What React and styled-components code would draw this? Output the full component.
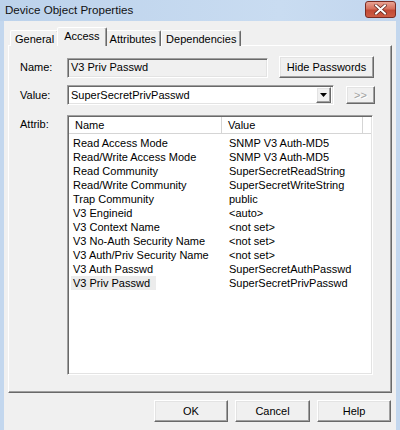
import styled, { createGlobalStyle, css } from "styled-components";

const GlobalStyle = createGlobalStyle`
  html, body {
    margin: 0;
    padding: 0;
    background: #ffffff;
  }
  body {
    font-family: "Liberation Sans", Arial, sans-serif;
    font-size: 11px;
    color: #000;
  }
`;

const ATTRIBS = [
  ["Read Access Mode", "SNMP V3 Auth-MD5"],
  ["Read/Write Access Mode", "SNMP V3 Auth-MD5"],
  ["Read Community", "SuperSecretReadString"],
  ["Read/Write Community", "SuperSecretWriteString"],
  ["Trap Community", "public"],
  ["V3 Engineid", "<auto>"],
  ["V3 Context Name", "<not set>"],
  ["V3 No-Auth Security Name", "<not set>"],
  ["V3 Auth/Priv Security Name", "<not set>"],
  ["V3 Auth Passwd", "SuperSecretAuthPasswd"],
  ["V3 Priv Passwd", "SuperSecretPrivPasswd"],
];

const TABS = ["General", "Access", "Attributes", "Dependencies"];

// classic 3d edges
const raised = css`
  border-style: solid;
  border-width: 1px;
  border-color: #ffffff #696969 #696969 #ffffff;
  box-shadow: inset -1px -1px 0 #a0a0a0, inset 1px 1px 0 #e3e3e3;
`;

const sunken = css`
  border-style: solid;
  border-width: 1px;
  border-color: #a0a0a0 #ffffff #ffffff #a0a0a0;
  box-shadow: inset 1px 1px 0 #696969, inset -1px -1px 0 #e3e3e3;
`;

const Window = styled.div`
  width: 400px;
  height: 430px;
  display: flex;
  flex-direction: column;
  background: #c3d7ee;
  overflow: hidden;
`;

const TitleBar = styled.div`
  height: 21px;
  flex: none;
  display: flex;
  align-items: flex-start;
  justify-content: space-between;
  background: linear-gradient(to right, #bcd2eb, #c9dcf1 70%, #c2d6ee);
`;

const Title = styled.div`
  font-size: 11.6px;
  line-height: 20px;
  padding-left: 5px;
  color: #111;
`;

const CloseButton = styled.div`
  width: 31px;
  height: 17px;
  margin-top: 1px;
  margin-right: 4px;
  box-sizing: border-box;
  border: 1px solid #7a2b22;
  border-radius: 3px;
  background: linear-gradient(#e9a394, #d5705c 45%, #c24a35 55%, #cd5d45);
  display: flex;
  align-items: center;
  justify-content: center;
`;

const Client = styled.div`
  flex: 1;
  margin: 0 4px;
  background: #f0f0f0;
  padding: 6px 4px 0;
  display: flex;
  flex-direction: column;
`;

const TabStrip = styled.div`
  display: flex;
  align-items: flex-end;
  padding-left: 2px;
  height: 19px;
  position: relative;
  z-index: 1;
  margin-bottom: -1px;
`;

const Tab = styled.div`
  height: ${(p) => (p.$active ? "19px" : "16px")};
  box-sizing: border-box;
  padding: 0 ${(p) => (p.$active ? "6px" : "4px")};
  margin: 0 ${(p) => (p.$active ? "-2px" : "0")};
  position: relative;
  z-index: ${(p) => (p.$active ? 2 : 1)};
  display: flex;
  align-items: center;
  padding-top: ${(p) => (p.$active ? "0" : "1px")};
  padding-bottom: ${(p) => (p.$active ? "2px" : "0")};
  background: #f0f0f0;
  border-style: solid;
  border-width: 1px 1px 0 1px;
  border-color: #ffffff #696969 transparent #ffffff;
  border-radius: 2px 2px 0 0;
  box-shadow: inset -1px 0 0 #a0a0a0;
`;

const Panel = styled.div`
  height: 348px;
  box-sizing: border-box;
  ${raised};
  box-shadow: inset -1px -1px 0 #a0a0a0;
  padding: 10px 0 0 12px;
  display: flex;
  flex-direction: column;
`;

const FieldRow = styled.div`
  display: flex;
  align-items: ${(p) => (p.$top ? "flex-start" : "center")};
  margin-top: ${(p) => p.$gap || 0}px;
`;

const Label = styled.div`
  width: 46px;
  flex: none;
  padding-top: ${(p) => (p.$top ? "3px" : "0")};
  margin-left: -1px;
`;

const NameField = styled.div`
  width: 201px;
  height: 20px;
  box-sizing: border-box;
  ${sunken};
  background: #f0f0f0;
  padding-left: 3px;
  line-height: 17px;
  margin-top: 1px;
  margin-left: 1px;
`;

const Button = styled.div`
  width: ${(p) => p.$w}px;
  height: ${(p) => p.$h || 22}px;
  box-sizing: border-box;
  ${raised};
  display: flex;
  align-items: center;
  justify-content: center;
  color: ${(p) => (p.$disabled ? "#a0a0a0" : "#000")};
  text-shadow: ${(p) => (p.$disabled ? "1px 1px 0 #fff" : "none")};
  margin-left: ${(p) => p.$ml || 0}px;
`;

const Combo = styled.div`
  width: 267px;
  height: 20px;
  box-sizing: border-box;
  ${sunken};
  background: #fff;
  display: flex;
  align-items: center;
  justify-content: space-between;
  padding: 0 2px 0 3px;
  margin-left: 1px;
`;

const DropButton = styled.div`
  width: 15px;
  height: 16px;
  box-sizing: border-box;
  ${raised};
  background: #f0f0f0;
  display: flex;
  align-items: center;
  justify-content: center;
`;

const ListBox = styled.div`
  width: 306px;
  height: 260px;
  box-sizing: border-box;
  ${sunken};
  background: #fff;
  padding: 1px;
  margin-left: 1px;
`;

const Header = styled.div`
  display: flex;
  height: 16px;
  border-bottom: 1px solid #d5d5d5;
  margin-bottom: 2px;
`;

const HeaderCell = styled.div`
  width: ${(p) => p.$w}px;
  box-sizing: border-box;
  padding-left: 6px;
  line-height: 16px;
  border-right: 1px solid #d5d5d5;
`;

const Row = styled.div`
  display: flex;
  height: 14px;
  line-height: 14px;
`;

const Cell = styled.div`
  width: ${(p) => p.$w}px;
  flex: none;
  padding-left: ${(p) => p.$pl}px;
  box-sizing: border-box;
  white-space: nowrap;
`;

const CellText = styled.span`
  padding: 0 6px 0 2px;
  margin-left: -2px;
  background: ${(p) => (p.$selected ? "#ececec" : "transparent")};
  display: inline-block;
`;

const Footer = styled.div`
  display: flex;
  justify-content: flex-end;
  gap: 7px;
  padding: 7px 1px 0 0;
`;

export default function App() {
  return (
    <>
      <GlobalStyle />
      <Window>
        <TitleBar>
          <Title>Device Object Properties</Title>
          <CloseButton>
            <svg width="13" height="11" viewBox="0 0 13 11">
              <path
                d="M2 1.5 L11 9.5 M11 1.5 L2 9.5"
                stroke="#5a2018"
                strokeWidth="3.4"
                strokeLinecap="square"
              />
              <path
                d="M2 1.5 L11 9.5 M11 1.5 L2 9.5"
                stroke="#ffffff"
                strokeWidth="2"
                strokeLinecap="square"
              />
            </svg>
          </CloseButton>
        </TitleBar>
        <Client>
          <TabStrip>
            {TABS.map((t) => (
              <Tab key={t} $active={t === "Access"}>
                {t}
              </Tab>
            ))}
          </TabStrip>
          <Panel>
            <FieldRow>
              <Label>Name:</Label>
              <NameField>V3 Priv Passwd</NameField>
              <Button $w={95} $ml={11}>
                Hide Passwords
              </Button>
            </FieldRow>
            <FieldRow $gap={7}>
              <Label>Value:</Label>
              <Combo>
                <span>SuperSecretPrivPasswd</span>
                <DropButton>
                  <svg width="7" height="4" viewBox="0 0 7 4">
                    <path d="M0 0 H7 L3.5 4 Z" fill="#000" />
                  </svg>
                </DropButton>
              </Combo>
              <Button $w={29} $h={18} $ml={12} $disabled>
                &gt;&gt;
              </Button>
            </FieldRow>
            <FieldRow $gap={10} $top>
              <Label $top>Attrib:</Label>
              <ListBox>
                <Header>
                  <HeaderCell $w={153}>Name</HeaderCell>
                  <HeaderCell $w={141}>Value</HeaderCell>
                </Header>
                {ATTRIBS.map(([name, value], i) => (
                  <Row key={name}>
                    <Cell $w={153} $pl={4}>
                      <CellText $selected={i === ATTRIBS.length - 1}>{name}</CellText>
                    </Cell>
                    <Cell $w={150} $pl={7}>
                      {value}
                    </Cell>
                  </Row>
                ))}
              </ListBox>
            </FieldRow>
          </Panel>
          <Footer>
            <Button $w={74}>OK</Button>
            <Button $w={75}>Cancel</Button>
            <Button $w={74}>Help</Button>
          </Footer>
        </Client>
      </Window>
    </>
  );
}
